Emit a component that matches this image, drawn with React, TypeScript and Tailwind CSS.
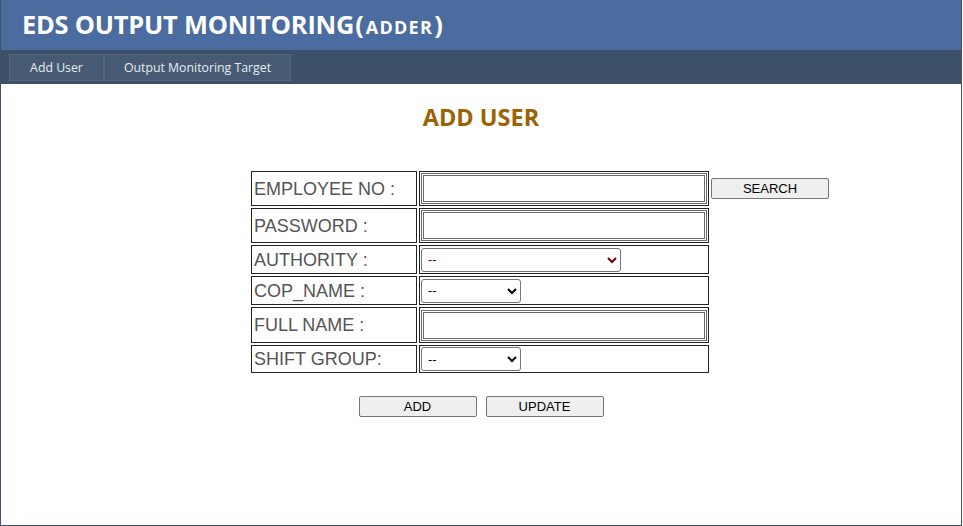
import React from "react";

const rows: { label: string; kind: "text" | "sel200" | "sel100"; h: string }[] = [
  { label: "EMPLOYEE NO :", kind: "text", h: "h-[35px]" },
  { label: "PASSWORD :", kind: "text", h: "h-[35px]" },
  { label: "AUTHORITY :", kind: "sel200", h: "h-[29px]" },
  { label: "COP_NAME :", kind: "sel100", h: "h-[29px]" },
  { label: "FULL NAME :", kind: "text", h: "h-[36px]" },
  { label: "SHIFT GROUP:", kind: "sel100", h: "h-[28px]" },
];

export default function App() {
  return (
    <div className="w-[963px] h-[526px] bg-white overflow-hidden">
      <div className="w-[962px] h-[526px] border-l border-r border-b border-[#3f536d] flex flex-col">
        <div className="h-[50px] bg-[#4a6c9f] flex items-center pl-[21px]">
          <h1 className="text-white font-bold text-[25.4px] leading-none tracking-[-0.2px] [font-family:'Open_Sans',sans-serif] flex items-baseline">
            <span>EDS OUTPUT MONITORING</span>
            <span className="ml-[1px]">(</span>
            <span className="text-[18px] tracking-[1.3px] ml-[2px]">ADDER</span>
            <span className="ml-[1px]">)</span>
          </h1>
        </div>
        <div className="h-[34px] bg-[#3d5169] flex items-center pl-[8px]">
          <div className="flex h-[27px] [font-family:'Open_Sans',sans-serif] text-[12.3px] text-[#e6ebf1]">
            <div className="w-[95px] h-full bg-[#465b73] border border-[#52667d] flex items-center justify-center pt-[2px]">
              Add User
            </div>
            <div className="w-[187px] h-full bg-[#465b73] border border-[#52667d] flex items-center justify-center pt-[2px]">
              Output Monitoring Target
            </div>
          </div>
        </div>
        <div className="flex-1 flex flex-col">
          <h2 className="mt-[18px] text-center text-[23.5px] leading-[30px] font-bold text-[#9b6303] [font-family:'Open_Sans',sans-serif]">
            ADD USER
          </h2>
          <table className="mt-[37px] ml-[248px] border-separate border-spacing-[2px] [font-family:'Liberation_Sans',Arial,sans-serif]">
            <tbody>
              {rows.map((r, i) => (
                <tr key={r.label} className={r.h}>
                  <td className="w-[166px] border border-[#222] px-[2px] py-0 text-[18px] text-[#555] align-middle leading-none">
                    {r.label}
                  </td>
                  <td className="w-[289px] border border-[#222] p-[1px] align-middle">
                    {r.kind === "text" ? (
                      <input
                        type="text"
                        className="block w-[286px] h-[31px] border-[3px] border-double border-[#6a6a6a] bg-white"
                      />
                    ) : (
                      <select
                        className={`${r.kind === "sel200" ? "w-[200px]" : "w-[100px]"} block h-[24px] border border-[#767676] rounded-[3px] bg-white text-[13px] pl-[2px] ${
                          r.label === "AUTHORITY :" ? "text-[#7a0000]" : "text-black"
                        }`}
                        defaultValue="--"
                      >
                        <option value="--">--</option>
                      </select>
                    )}
                  </td>
                  <td className="p-0 align-middle">
                    {i === 0 ? (
                      <button className="block w-[118px] h-[21px] border border-[#767676] rounded-[2px] bg-[#efefef] text-[13px] text-black leading-none">
                        SEARCH
                      </button>
                    ) : null}
                  </td>
                </tr>
              ))}
            </tbody>
          </table>
          <div className="mt-[21px] flex justify-center gap-[9px] [font-family:'Liberation_Sans',Arial,sans-serif]">
            <button className="w-[118px] h-[21px] border border-[#767676] rounded-[2px] bg-[#efefef] text-[13px] text-black leading-none">
              ADD
            </button>
            <button className="w-[118px] h-[21px] border border-[#767676] rounded-[2px] bg-[#efefef] text-[13px] text-black leading-none">
              UPDATE
            </button>
          </div>
        </div>
      </div>
    </div>
  );
}
